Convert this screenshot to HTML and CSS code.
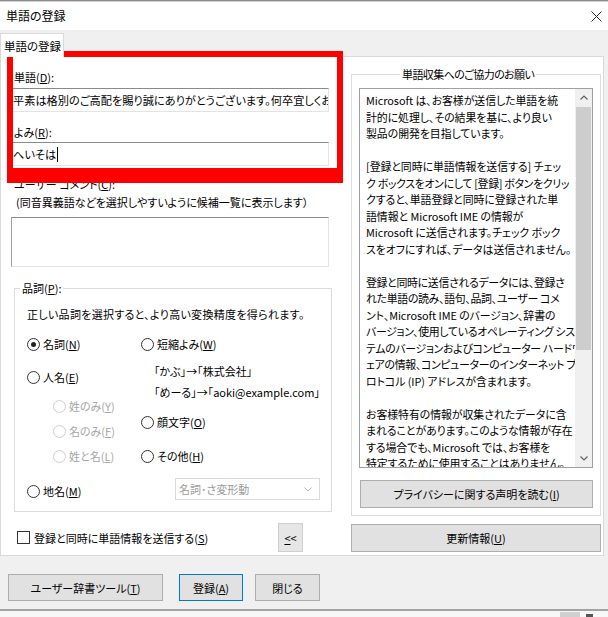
FILE: index.html
```html
<!DOCTYPE html>
<html lang="ja">
<head>
<meta charset="utf-8">
<title>単語の登録</title>
<link rel="stylesheet" href="styles.css">
</head>
<body>
<div class="window">
  <div class="topline"></div>
  <div class="titlebar">
    <span class="title">単語の登録</span>
    <svg class="close" width="11" height="11" viewBox="0 0 11 11"><path d="M0.5 0.5L10.5 10.5M10.5 0.5L0.5 10.5" stroke="#2b2b2b" stroke-width="1" fill="none"/></svg>
  </div>
  <div class="tabstrip"><div class="tab">単語の登録</div></div>
  <div class="panel">
    <div class="leftcol">
      <div class="lbl lbl1">単語(<u>D</u>):</div>
      <div class="field field1">平素は格別のご高配を賜り誠にありがとうございます。何卒宜しくお願い申し上げます。</div>
      <div class="lbl lbl2">よみ(<u>R</u>):</div>
      <div class="field field2">へいそは<span class="caret"></span></div>
      <div class="lbl lbl3">ユーザー コメント(<u>C</u>):</div>
      <div class="hint">(同音異義語などを選択しやすいように候補一覧に表示します）</div>
      <div class="textarea"></div>
      <div class="group">
        <div class="legend">品詞(<u>P</u>):</div>
        <div class="desc">正しい品詞を選択すると、より高い変換精度を得られます。</div>
        <div class="radios">
          <div class="rcol rcol-left">
            <div class="radio r-meishi"><span class="circle checked"></span><span>名詞(<u>N</u>)</span></div>
            <div class="radio r-jinmei"><span class="circle"></span><span>人名(<u>E</u>)</span></div>
            <div class="radio sub r-sei"><span class="circle"></span><span>姓のみ(<u>Y</u>)</span></div>
            <div class="radio sub r-mei"><span class="circle"></span><span>名のみ(<u>F</u>)</span></div>
            <div class="radio sub r-seimei"><span class="circle"></span><span>姓と名(<u>L</u>)</span></div>
            <div class="radio r-chimei"><span class="circle"></span><span>地名(<u>M</u>)</span></div>
          </div>
          <div class="rcol rcol-right">
            <div class="radio r-tanshuku"><span class="circle"></span><span>短縮よみ(<u>W</u>)</span></div>
            <div class="example ex1">「かぶ」→「株式会社」</div>
            <div class="example ex2">「めーる」→「aoki@example.com」</div>
            <div class="radio r-kao"><span class="circle"></span><span>顔文字(<u>O</u>)</span></div>
            <div class="radio r-sonota"><span class="circle"></span><span>その他(<u>H</u>)</span></div>
            <div class="combo"><span>名詞･さ変形動</span><svg width="8" height="5" viewBox="0 0 8 5"><path d="M0.5 0.5L4 4L7.5 0.5" stroke="#b8b8b8" fill="none"/></svg></div>
          </div>
        </div>
      </div>
      <div class="sendrow">
        <span class="checkbox"></span><span class="sendlabel">登録と同時に単語情報を送信する(<u>S</u>)</span>
        <div class="btn btn-less"><u>&lt;</u>&lt;</div>
      </div>
    </div>
    <div class="rightcol">
      <div class="rgroup">
        <div class="rlegend">単語収集へのご協力のお願い</div>
        <div class="listbox">
          <div class="lbtext">
            <div>Microsoft は、お客様が送信した単語を統</div>
            <div>計的に処理し、その結果を基に、より良い</div>
            <div>製品の開発を目指しています。</div>
            <div class="blank"></div>
            <div>[登録と同時に単語情報を送信する] チェッ</div>
            <div class="tight">ク ボックスをオンにして [登録] ボタンをクリッ</div>
            <div>クすると、単語登録と同時に登録された単</div>
            <div>語情報と Microsoft IME の情報が</div>
            <div>Microsoft に送信されます。チェック ボック</div>
            <div>スをオフにすれば、データは送信されません。</div>
            <div class="blank"></div>
            <div class="tight">登録と同時に送信されるデータには、登録さ</div>
            <div class="tight">れた単語の読み、語句、品詞、ユーザー コメ</div>
            <div>ント、Microsoft IME のバージョン、辞書の</div>
            <div class="tight">バージョン、使用しているオペレーティング シス</div>
            <div class="tight">テムのバージョンおよびコンピューター ハードウ</div>
            <div class="tight">ェアの情報、コンピューターのインターネット プ</div>
            <div>ロトコル (IP) アドレスが含まれます。</div>
            <div class="blank"></div>
            <div>お客様特有の情報が収集されたデータに含</div>
            <div>まれることがあります。このような情報が存在</div>
            <div>する場合でも、Microsoft では、お客様を</div>
            <div>特定するために使用することはありません。</div>
          </div>
          <div class="scrollbar">
            <div class="sarrow"><svg width="8" height="5" viewBox="0 0 8 5"><path d="M0.5 4.5L4 1L7.5 4.5" stroke="#606060" stroke-width="1.2" fill="none"/></svg></div>
            <div class="thumb"></div>
            <div class="sarrow down"><svg width="8" height="5" viewBox="0 0 8 5"><path d="M0.5 0.5L4 4L7.5 0.5" stroke="#606060" stroke-width="1.2" fill="none"/></svg></div>
          </div>
        </div>
        <div class="btn btn-privacy">プライバシーに関する声明を読む(<u>I</u>)</div>
      </div>
      <div class="btn btn-update">更新情報(<u>U</u>)</div>
    </div>
  </div>
  <div class="footer">
    <div class="btn btn-tool">ユーザー辞書ツール(<u>T</u>)</div>
    <div class="btn btn-register">登録(<u>A</u>)</div>
    <div class="btn btn-closebtn">閉じる</div>
  </div>
  <div class="bottomstrip"><div class="bs-thumb"></div><div class="bs-arrow"></div></div>
  <div class="highlight"></div>
</div>
</body>
</html>
```

FILE: styles.css
```css
* { box-sizing: border-box; }
html, body { margin: 0; padding: 0; }
body {
  width: 608px;
  height: 617px;
  overflow: hidden;
  background: #f0f0f0;
  font-family: "Noto Sans CJK JP", "Noto Sans", sans-serif;
  font-size: 11px;
  line-height: 16px;
  color: #000;
  font-feature-settings: "palt";
}
u { text-decoration: underline; text-underline-offset: 1px; }
.window { position: relative; width: 608px; height: 617px; display: flex; flex-direction: column; }
.topline { height: 2px; border-top: 1px solid #8c8c8c; background: #cfcfcf; }
.titlebar { height: 28px; background: #fff; display: flex; align-items: center; justify-content: space-between; padding: 0 6px; font-size: 12px; }
.tabstrip { height: 26px; background: #f0f0f0; display: flex; align-items: flex-end; }
.tab { position: relative; z-index: 1; width: 64px; height: 24px; margin-bottom: -1px; background: #fff; border: 1px solid #d9d9d9; border-bottom: none; padding: 4px 0 0 3px; font-size: 11.5px; }
.panel { width: 604px; height: 500px; background: #fff; border: 1px solid #d9d9d9; display: flex; }

.leftcol { width: 350px; display: flex; flex-direction: column; }
.lbl { height: 16px; margin-left: 13px; }
.lbl1 { margin-top: 12px; }
.lbl2 { margin-top: 12px; }
.lbl3 { margin-top: 10px; }
.field { margin-left: 10px; width: 318px; height: 24px; border: 1px solid #e3e3e3; border-top-color: #8a8a8a; padding: 3px 1px; white-space: nowrap; overflow: hidden; display: flex; align-items: center; font-size: 11.2px; }
.field1 { margin-top: 3px; }
.field2 { margin-top: 2px; }
.caret { display: inline-block; width: 1px; height: 15px; background: #000; margin-left: 1px; }
.hint { margin-top: 2px; margin-left: 15px; height: 16px; }
.textarea { margin-top: 7px; margin-left: 10px; width: 318px; height: 50px; border: 1px solid #e3e3e3; border-top-color: #8a8a8a; border-left-color: #a0a0a0; }
.group { margin-top: 21px; margin-left: 13px; width: 318px; height: 224px; border: 1px solid #dcdcdc; display: flex; flex-direction: column; }
.legend { margin-top: -9px; margin-left: 5px; align-self: flex-start; background: #fff; padding: 0 2px; height: 16px; }
.desc { margin-top: 10px; margin-left: 12px; height: 16px; letter-spacing: 0.3px; }
.radios { display: flex; margin-left: 12px; margin-top: -1px; }
.rcol { display: flex; flex-direction: column; }
.rcol-left { width: 114px; }
.radio { display: flex; align-items: center; height: 16px; gap: 3px; white-space: nowrap; }
.circle { display: inline-block; width: 13px; height: 13px; border: 1px solid #333; border-radius: 50%; background: #fff; position: relative; flex: none; }
.circle.checked::after { content: ""; position: absolute; left: 3px; top: 3px; width: 5px; height: 5px; border-radius: 50%; background: #222; }
.radio.sub { margin-left: 26px; color: #a6a6a6; }
.radio.sub .circle { border-color: #cfcfcf; }
.r-meishi { margin-top: 15px; }
.r-jinmei { margin-top: 17px; }
.r-sei { margin-top: 13px; }
.r-mei { margin-top: 9px; }
.r-seimei { margin-top: 9px; }
.r-chimei { margin-top: 19px; }
.r-tanshuku { margin-top: 15px; }
.example { height: 16px; margin-left: 13px; white-space: nowrap; }
.ex1 { margin-top: 11px; }
.ex2 { margin-top: 5px; }
.r-kao { margin-top: 14px; }
.r-sonota { margin-top: 18px; }
.combo { margin-top: 14px; margin-left: 34px; width: 145px; height: 22px; border: 1px solid #d9d9d9; background: #fff; color: #9a9a9a; display: flex; align-items: center; justify-content: space-between; padding: 0 7px 0 3px; }

.sendrow { margin-top: 11px; height: 29px; display: flex; align-items: center; }
.checkbox { width: 13px; height: 13px; border: 1px solid #333; background: #fff; margin-left: 16px; flex: none; }
.sendlabel { margin-left: 4px; }
.btn { background: #e1e1e1; border: 1px solid #adadad; display: flex; align-items: center; justify-content: center; white-space: nowrap; }
.btn-less { margin-left: auto; margin-right: 48px; width: 25px; height: 29px; background: #e6e6e6; border-color: #cfcfcf; }

.rightcol { width: 252px; display: flex; flex-direction: column; }
.rgroup { margin-top: 17px; width: 250px; height: 442px; border: 1px solid #dcdcdc; display: flex; flex-direction: column; }
.rlegend { margin-top: -9px; margin-left: 48px; align-self: flex-start; background: #fff; padding: 0 2px; height: 16px; letter-spacing: -0.6px; }
.listbox { margin-top: 6px; margin-left: 7px; width: 234px; height: 380px; border: 1px solid #a0a0a0; display: flex; }
.lbtext { flex: 1; overflow: hidden; padding: 3px 0 0 6px; line-height: 16.5px; white-space: nowrap; font-size: 10.9px; letter-spacing: -0.05px; }
.lbtext .tight { letter-spacing: -0.3px; }
.lbtext .blank { height: 16.5px; }
.scrollbar { width: 17px; background: #f0f0f0; display: flex; flex-direction: column; }
.sarrow { height: 17px; display: flex; align-items: center; justify-content: center; }
.thumb { margin: 1px 1px 0 1px; height: 243px; background: #cdcdcd; }
.sarrow.down { margin-top: auto; }
.btn-privacy { margin-top: 12px; margin-left: 8px; width: 233px; height: 28px; }
.btn-update { margin-top: 8px; width: 250px; height: 28px; }

.footer { height: 53px; display: flex; padding: 18px 0 0 8px; align-items: flex-start; }
.footer .btn { height: 27px; }
.btn-tool { width: 155px; }
.btn-register { width: 64px; margin-left: 16px; border-color: #0078d7; }
.btn-closebtn { width: 65px; margin-left: 12px; }

.bottomstrip { height: 8px; border-top: 2px solid #a3a3a3; background: #f7f7f7; display: flex; }
.bs-thumb { margin-left: 560px; width: 20px; background: #d0d0d0; margin-top: 1px; }
.bs-arrow { margin-left: 6px; margin-top: 3px; width: 7px; height: 3px; background: #555; }

.highlight { position: absolute; left: 7px; top: 51px; width: 336px; height: 132px; border: 6px solid #ff0000; border-bottom-width: 15px; pointer-events: none; }
```
